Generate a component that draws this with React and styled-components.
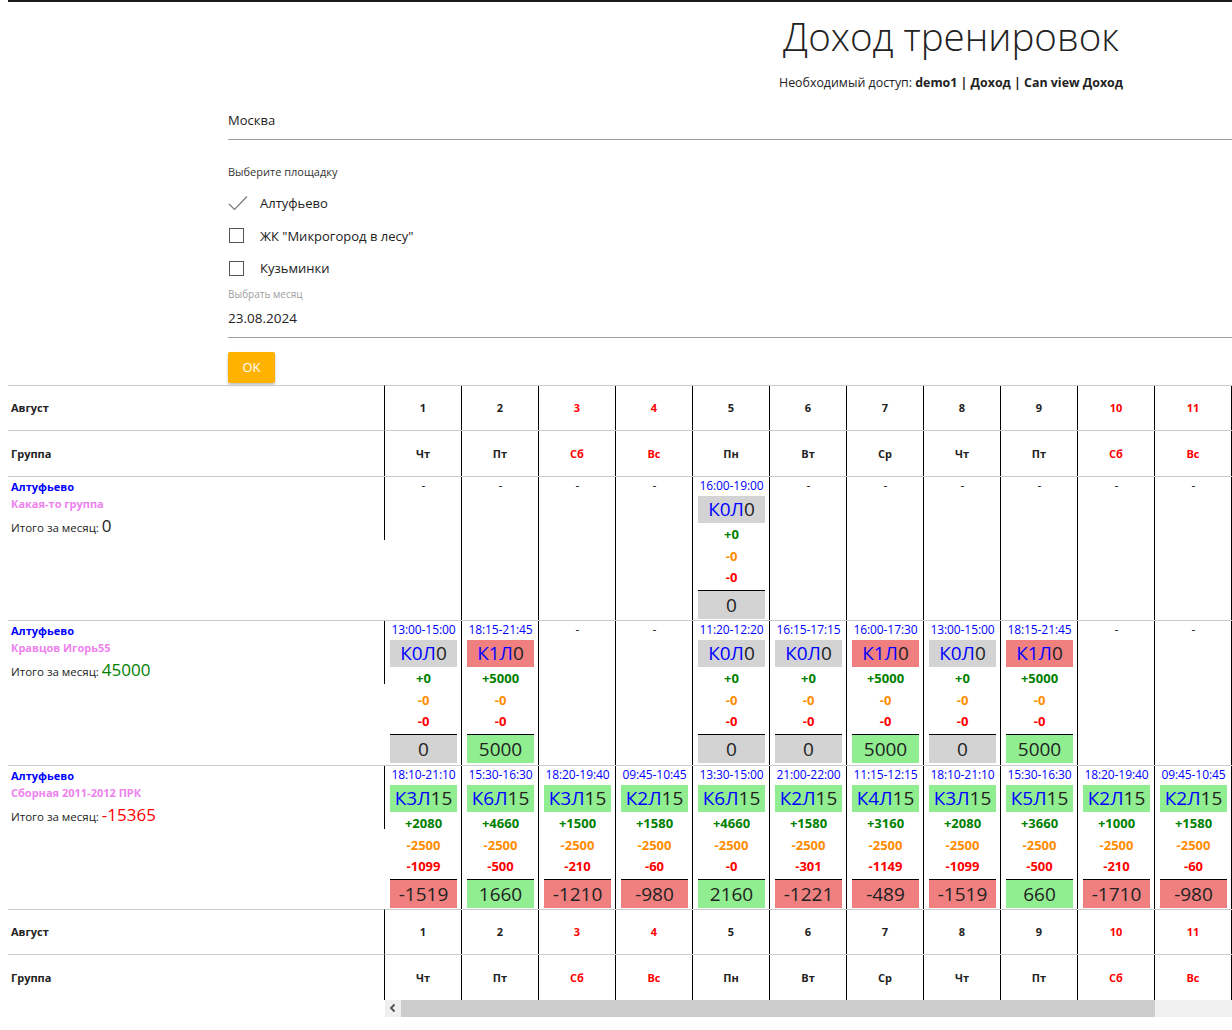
import styled, { createGlobalStyle } from 'styled-components';

const GlobalStyle = createGlobalStyle`
  body {
    margin: 0 0 8px 8px;
    padding-top: 10px;
    border-top: 2px solid #1b1b1b;
    overflow: hidden;
    font-family: 'Open Sans', 'Noto Sans', sans-serif;
    color: #222;
    background: #fff;
  }
`;

const Page = styled.div`
  width: 1224px;
`;

const Header = styled.header`
  margin-left: 662px;
  text-align: center;
`;

const Title = styled.h1`
  margin: 0;
  font-size: 38.5px;
  font-weight: 300;
  line-height: 48px;
  color: #222;
`;

const Access = styled.div`
  margin-top: 14px;
  font-size: 12.4px;
  line-height: 18px;
`;

const Form = styled.form`
  margin-left: 220px;
  font-size: 13px;
`;

const Field = styled.div`
  margin-top: ${(p) => p.$top}px;
  padding-bottom: 10px;
  border-bottom: 1px solid #9e9e9e;
  font-size: ${(p) => p.$size || 13}px;
  line-height: 18px;
`;

const SmallLabel = styled.div`
  margin-top: ${(p) => p.$top}px;
  font-size: ${(p) => (p.$muted ? 10 : 11)}px;
  line-height: ${(p) => (p.$muted ? 14 : 16)}px;
  color: ${(p) => (p.$muted ? '#9e9e9e' : '#333')};
`;

const CheckList = styled.div`
  margin-top: 7px;
`;

const CheckRow = styled.label`
  display: flex;
  align-items: center;
  gap: 12px;
  height: 32.5px;
`;

const Box = styled.span`
  width: 20px;
  height: 16px;
  display: flex;
  align-items: center;
  flex: none;

  &::before {
    content: ${(p) => (p.$checked ? 'none' : "''")};
    display: block;
    width: 13px;
    height: 13px;
    margin-left: 1px;
    border: 1px solid #555;
  }
`;

const OkButton = styled.button`
  display: block;
  margin-top: 14px;
  width: 47px;
  height: 31px;
  border: none;
  border-radius: 2px;
  background: #ffb300;
  color: #fff;
  font-family: inherit;
  font-size: 13px;
  box-shadow: 0 2px 3px rgba(0, 0, 0, 0.25);
`;

const TableWrap = styled.div`
  margin-top: 2px;
  display: flex;
`;

const LeftPane = styled.div`
  width: 377px;
  flex: none;
`;

const LeftCell = styled.div`
  box-sizing: border-box;
  height: ${(p) => p.$h}px;
  border-top: 1px solid #ccc;
  ${(p) => p.$head && 'border-right: 1px solid #000; display: flex; align-items: center;'}
  padding-left: 3px;
  font-size: 11px;
  font-weight: 700;
`;

const Owner = styled.div`
  margin-left: -3px;
  padding: 1px 0 1px 3px;
  border-right: 1px solid #000;
`;

const Place = styled.div`
  font-size: 11px;
  font-weight: 700;
  line-height: 17px;
  color: ${(p) => p.$color};
`;

const MonthTotal = styled.div`
  margin-top: 3px;
  font-size: 11.5px;
  font-weight: 400;
  line-height: 22px;

  span {
    font-size: 17px;
    color: ${(p) => p.$color};
  }
`;

const DayPane = styled.div`
  flex: 1;
  min-width: 0;
  overflow: hidden;
`;

const DayRow = styled.div`
  display: flex;
  box-sizing: border-box;
  height: ${(p) => p.$h}px;
  border-top: 1px solid #ccc;
`;

const DayCell = styled.div`
  box-sizing: border-box;
  width: 77px;
  flex: none;
  border-right: 1px solid #000;
  text-align: center;
  ${(p) =>
    p.$head
      ? `display: flex; align-items: center; justify-content: center;
         font-size: 11px; font-weight: 700; color: ${p.$weekend ? 'red' : '#222'};`
      : 'padding: 1px 4px 0 5px;'}
`;

const Dash = styled.div`
  font-size: 12px;
  line-height: 16px;
`;

const Time = styled.div`
  font-size: 12px;
  line-height: 16px;
  color: blue;
  white-space: nowrap;
  letter-spacing: -0.1px;
`;

const Code = styled.div`
  margin-top: 2px;
  height: 27px;
  background: ${(p) => p.$bg};
  font-size: 19px;
  line-height: 27px;
  color: #222;
  white-space: nowrap;

  span {
    color: blue;
  }
`;

const Amounts = styled.div`
  padding-top: 1.5px;
`;

const Money = styled.div`
  font-size: 13px;
  font-weight: 700;
  line-height: 21.5px;
  color: ${(p) => p.$color};
`;

const Total = styled.div`
  margin-top: 1px;
  height: 28px;
  border-top: 1px solid #000;
  background: ${(p) => p.$bg};
  font-size: 19px;
  line-height: 28px;
  color: #222;
`;

const ScrollBar = styled.div`
  display: flex;
  height: 17px;
  background: #f0f0f0;
`;

const ScrollArrow = styled.div`
  width: 16px;
  flex: none;
  display: flex;
  align-items: center;
  justify-content: center;
`;

const ScrollThumb = styled.div`
  width: 754px;
  background: #cdcdcd;
`;

const GRAY = '#d3d3d3';
const CORAL = '#f08080';
const GREEN = '#90ee90';

const days = [
  [1, 'Чт'], [2, 'Пт'], [3, 'Сб'], [4, 'Вс'], [5, 'Пн'], [6, 'Вт'],
  [7, 'Ср'], [8, 'Чт'], [9, 'Пт'], [10, 'Сб'], [11, 'Вс'],
];
const weekend = (d) => d === 3 || d === 4 || d === 10 || d === 11;

const s = (time, k, n, bg, plus, m1, m2, total) => ({ time, k, n, bg, plus, m1, m2, total });
const zero = (time) => s(time, 'К0Л', '0', GRAY, '0', '0', '0', '0');
const five = (time) => s(time, 'К1Л', '0', CORAL, '5000', '0', '0', '5000');

const groups = [
  {
    name: 'Какая-то группа',
    total: '0',
    color: '#222',
    h: 144,
    cells: [null, null, null, null, zero('16:00-19:00'), null, null, null, null, null, null],
  },
  {
    name: 'Кравцов Игорь55',
    total: '45000',
    color: 'green',
    h: 145,
    cells: [
      zero('13:00-15:00'), five('18:15-21:45'), null, null, zero('11:20-12:20'),
      zero('16:15-17:15'), five('16:00-17:30'), zero('13:00-15:00'), five('18:15-21:45'),
      null, null,
    ],
  },
  {
    name: 'Сборная 2011-2012 ПРК',
    total: '-15365',
    color: 'red',
    h: 144,
    cells: [
      s('18:10-21:10', 'К3Л', '15', GREEN, '2080', '2500', '1099', '-1519'),
      s('15:30-16:30', 'К6Л', '15', GREEN, '4660', '2500', '500', '1660'),
      s('18:20-19:40', 'К3Л', '15', GREEN, '1500', '2500', '210', '-1210'),
      s('09:45-10:45', 'К2Л', '15', GREEN, '1580', '2500', '60', '-980'),
      s('13:30-15:00', 'К6Л', '15', GREEN, '4660', '2500', '0', '2160'),
      s('21:00-22:00', 'К2Л', '15', GREEN, '1580', '2500', '301', '-1221'),
      s('11:15-12:15', 'К4Л', '15', GREEN, '3160', '2500', '1149', '-489'),
      s('18:10-21:10', 'К3Л', '15', GREEN, '2080', '2500', '1099', '-1519'),
      s('15:30-16:30', 'К5Л', '15', GREEN, '3660', '2500', '500', '660'),
      s('18:20-19:40', 'К2Л', '15', GREEN, '1000', '2500', '210', '-1710'),
      s('09:45-10:45', 'К2Л', '15', GREEN, '1580', '2500', '60', '-980'),
    ],
  },
];

function CheckMark() {
  return (
    <svg width="20" height="16" viewBox="0 0 20 16">
      <polyline points="1,9 6.5,14.5 19,1.5" fill="none" stroke="#777" strokeWidth="1.2" />
    </svg>
  );
}

function ChevronLeft() {
  return (
    <svg width="8" height="10" viewBox="0 0 8 10">
      <polyline points="5.5,1.5 2,5 5.5,8.5" fill="none" stroke="#505050" strokeWidth="1.8" />
    </svg>
  );
}

function Session({ cell }) {
  if (!cell) return <Dash>-</Dash>;
  return (
    <>
      <Time>{cell.time}</Time>
      <Code $bg={cell.bg}>
        <span>{cell.k}</span>
        {cell.n}
      </Code>
      <Amounts>
        <Money $color="green">+{cell.plus}</Money>
        <Money $color="darkorange">-{cell.m1}</Money>
        <Money $color="red">-{cell.m2}</Money>
      </Amounts>
      <Total $bg={cell.total.startsWith('-') ? CORAL : cell.total === '0' ? GRAY : GREEN}>
        {cell.total}
      </Total>
    </>
  );
}

function HeadRows() {
  return (
    <>
      <DayRow $h={45}>
        {days.map(([d]) => (
          <DayCell key={d} $head $weekend={weekend(d)}>{d}</DayCell>
        ))}
      </DayRow>
      <DayRow $h={46}>
        {days.map(([d, w]) => (
          <DayCell key={d} $head $weekend={weekend(d)}>{w}</DayCell>
        ))}
      </DayRow>
    </>
  );
}

export default function App() {
  return (
    <Page>
      <GlobalStyle />
      <Header>
        <Title>Доход тренировок</Title>
        <Access>
          Необходимый доступ: <b>demo1 | Доход | Can view Доход</b>
        </Access>
      </Header>

      <Form onSubmit={(e) => e.preventDefault()}>
        <Field $top={19}>Москва</Field>
        <SmallLabel $top={24}>Выберите площадку</SmallLabel>
        <CheckList>
          <CheckRow>
            <Box $checked>
              <CheckMark />
            </Box>
            Алтуфьево
          </CheckRow>
          <CheckRow>
            <Box />
            ЖК "Микрогород в лесу"
          </CheckRow>
          <CheckRow>
            <Box />
            Кузьминки
          </CheckRow>
        </CheckList>
        <SmallLabel $top={2} $muted>Выбрать месяц</SmallLabel>
        <Field $top={8} $size={13.5}>23.08.2024</Field>
        <OkButton type="submit">OK</OkButton>
      </Form>

      <TableWrap>
        <LeftPane>
          <LeftCell $h={45} $head>Август</LeftCell>
          <LeftCell $h={46} $head>Группа</LeftCell>
          {groups.map((g) => (
            <LeftCell key={g.name} $h={g.h}>
              <Owner>
                <Place $color="blue">Алтуфьево</Place>
                <Place $color="violet">{g.name}</Place>
                <MonthTotal $color={g.color}>
                  Итого за месяц: <span>{g.total}</span>
                </MonthTotal>
              </Owner>
            </LeftCell>
          ))}
          <LeftCell $h={45} $head>Август</LeftCell>
          <LeftCell $h={46} $head>Группа</LeftCell>
        </LeftPane>

        <DayPane>
          <HeadRows />
          {groups.map((g) => (
            <DayRow key={g.name} $h={g.h}>
              {g.cells.map((c, i) => (
                <DayCell key={i}>
                  <Session cell={c} />
                </DayCell>
              ))}
            </DayRow>
          ))}
          <HeadRows />
          <ScrollBar>
            <ScrollArrow>
              <ChevronLeft />
            </ScrollArrow>
            <ScrollThumb />
          </ScrollBar>
        </DayPane>
      </TableWrap>
    </Page>
  );
}
